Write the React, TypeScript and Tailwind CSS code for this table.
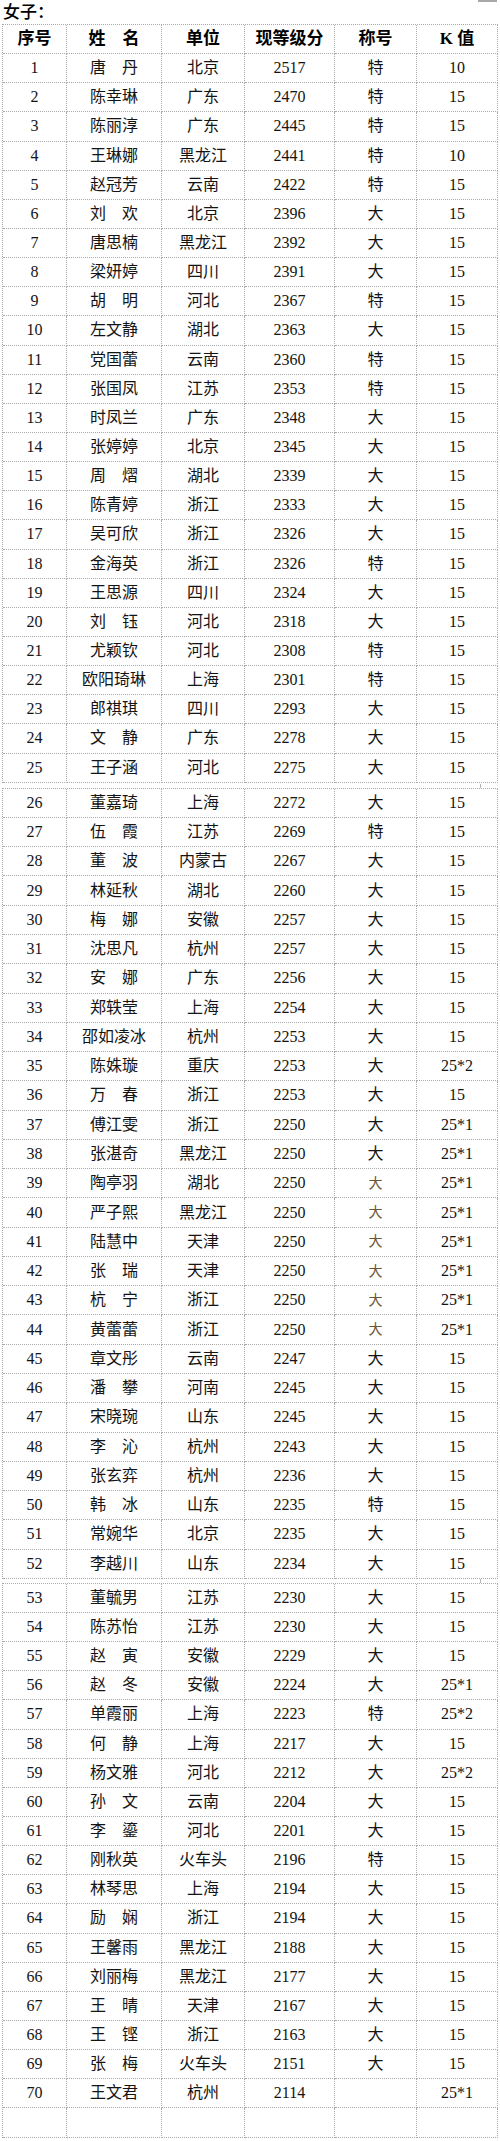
import React from 'react';

type Row = [number, string, string, number, string, string];

// [序号, 姓名, 单位, 现等级分, 称号, K值]
const rows: Row[] = [
  [1, '唐丹', '北京', 2517, '特', '10'],
  [2, '陈幸琳', '广东', 2470, '特', '15'],
  [3, '陈丽淳', '广东', 2445, '特', '15'],
  [4, '王琳娜', '黑龙江', 2441, '特', '10'],
  [5, '赵冠芳', '云南', 2422, '特', '15'],
  [6, '刘欢', '北京', 2396, '大', '15'],
  [7, '唐思楠', '黑龙江', 2392, '大', '15'],
  [8, '梁妍婷', '四川', 2391, '大', '15'],
  [9, '胡明', '河北', 2367, '特', '15'],
  [10, '左文静', '湖北', 2363, '大', '15'],
  [11, '党国蕾', '云南', 2360, '特', '15'],
  [12, '张国凤', '江苏', 2353, '特', '15'],
  [13, '时凤兰', '广东', 2348, '大', '15'],
  [14, '张婷婷', '北京', 2345, '大', '15'],
  [15, '周熠', '湖北', 2339, '大', '15'],
  [16, '陈青婷', '浙江', 2333, '大', '15'],
  [17, '吴可欣', '浙江', 2326, '大', '15'],
  [18, '金海英', '浙江', 2326, '特', '15'],
  [19, '王思源', '四川', 2324, '大', '15'],
  [20, '刘钰', '河北', 2318, '大', '15'],
  [21, '尤颖钦', '河北', 2308, '特', '15'],
  [22, '欧阳琦琳', '上海', 2301, '特', '15'],
  [23, '郎祺琪', '四川', 2293, '大', '15'],
  [24, '文静', '广东', 2278, '大', '15'],
  [25, '王子涵', '河北', 2275, '大', '15'],
  [26, '董嘉琦', '上海', 2272, '大', '15'],
  [27, '伍霞', '江苏', 2269, '特', '15'],
  [28, '董波', '内蒙古', 2267, '大', '15'],
  [29, '林延秋', '湖北', 2260, '大', '15'],
  [30, '梅娜', '安徽', 2257, '大', '15'],
  [31, '沈思凡', '杭州', 2257, '大', '15'],
  [32, '安娜', '广东', 2256, '大', '15'],
  [33, '郑轶莹', '上海', 2254, '大', '15'],
  [34, '邵如凌冰', '杭州', 2253, '大', '15'],
  [35, '陈姝璇', '重庆', 2253, '大', '25*2'],
  [36, '万春', '浙江', 2253, '大', '15'],
  [37, '傅江雯', '浙江', 2250, '大', '25*1'],
  [38, '张湛奇', '黑龙江', 2250, '大', '25*1'],
  [39, '陶亭羽', '湖北', 2250, '大', '25*1'],
  [40, '严子熙', '黑龙江', 2250, '大', '25*1'],
  [41, '陆慧中', '天津', 2250, '大', '25*1'],
  [42, '张瑞', '天津', 2250, '大', '25*1'],
  [43, '杭宁', '浙江', 2250, '大', '25*1'],
  [44, '黄蕾蕾', '浙江', 2250, '大', '25*1'],
  [45, '章文彤', '云南', 2247, '大', '15'],
  [46, '潘攀', '河南', 2245, '大', '15'],
  [47, '宋晓琬', '山东', 2245, '大', '15'],
  [48, '李沁', '杭州', 2243, '大', '15'],
  [49, '张玄弈', '杭州', 2236, '大', '15'],
  [50, '韩冰', '山东', 2235, '特', '15'],
  [51, '常婉华', '北京', 2235, '大', '15'],
  [52, '李越川', '山东', 2234, '大', '15'],
  [53, '董毓男', '江苏', 2230, '大', '15'],
  [54, '陈苏怡', '江苏', 2230, '大', '15'],
  [55, '赵寅', '安徽', 2229, '大', '15'],
  [56, '赵冬', '安徽', 2224, '大', '25*1'],
  [57, '单霞丽', '上海', 2223, '特', '25*2'],
  [58, '何静', '上海', 2217, '大', '15'],
  [59, '杨文雅', '河北', 2212, '大', '25*2'],
  [60, '孙文', '云南', 2204, '大', '15'],
  [61, '李鎏', '河北', 2201, '大', '15'],
  [62, '刚秋英', '火车头', 2196, '特', '15'],
  [63, '林琴思', '上海', 2194, '大', '15'],
  [64, '励娴', '浙江', 2194, '大', '15'],
  [65, '王馨雨', '黑龙江', 2188, '大', '15'],
  [66, '刘丽梅', '黑龙江', 2177, '大', '15'],
  [67, '王晴', '天津', 2167, '大', '15'],
  [68, '王铿', '浙江', 2163, '大', '15'],
  [69, '张梅', '火车头', 2151, '大', '15'],
  [70, '王文君', '杭州', 2114, '', '25*1'],
];

// rows whose 称号 was typed in a smaller, lighter face on the sheet
const faint = new Set([39, 40, 41, 42, 43, 44]);

// 2-char names are spread to the width of 3 chars, like the printed sheet
const spread = (name: string) => (name.length === 2 ? `${name[0]}\u3000${name[1]}` : name);

const cell =
  'flex items-center justify-center border-r border-b border-dotted border-[#a9a9a9] overflow-hidden whitespace-nowrap';

function Segment({ items, header, rowClass, blankRow }: {
  items: Row[];
  header?: boolean;
  rowClass: string;
  blankRow?: boolean;
}) {
  return (
    <div className="ml-[2px] grid w-[496px] grid-cols-[64px_95px_83px_90px_82px_81px] border-t border-l border-dotted border-[#a9a9a9]">
      {header && (
        <>
          {['序号', '姓\u3000名', '单位', '现等级分', '称号', 'K 值'].map((h) => (
            <div key={h} className={`${cell} ${rowClass} text-[17px] font-bold text-black`}>
              {h}
            </div>
          ))}
        </>
      )}
      {items.map((r) => (
        <React.Fragment key={r[0]}>
          <div className={`${cell} ${rowClass}`}>{r[0]}</div>
          <div className={`${cell} ${rowClass}`}>{spread(r[1])}</div>
          <div className={`${cell} ${rowClass}`}>{r[2]}</div>
          <div className={`${cell} ${rowClass}`}>{r[3]}</div>
          <div className={`${cell} ${rowClass} ${faint.has(r[0]) ? 'text-[14px] text-[#6b5733]' : ''}`}>{r[4]}</div>
          <div className={`${cell} ${rowClass}`}>{r[5]}</div>
        </React.Fragment>
      ))}
      {blankRow &&
        [0, 1, 2, 3, 4, 5].map((i) => <div key={i} className={`${cell} h-[30px]`} />)}
    </div>
  );
}

// little corner mark Word leaves where the table breaks across pages
function Break({ h }: { h: string }) {
  return (
    <div className={`flex ${h} items-end justify-end`}>
      <div className="mr-[19px] h-[4px] w-px bg-[#b5b5b5]" />
    </div>
  );
}

export default function App() {
  return (
    <div className="h-[2141px] w-[500px] bg-white font-['Liberation_Serif','Noto_Sans_CJK_SC',serif] text-[16px] text-[#141414]">
      <div className="flex h-[24px] items-start justify-between">
        <div className="pl-[3px] font-['Noto_Sans_CJK_SC',sans-serif] text-[17px] font-medium leading-[21px] text-black">女子：</div>
        <div className="mr-[3px] h-[2px] w-[19px] bg-[#a8a8a8]" />
      </div>
      <Segment items={rows.slice(0, 25)} header rowClass="h-[29.15px]" />
      <Break h="h-[5px]" />
      <Segment items={rows.slice(25, 52)} rowClass="h-[29.27px]" />
      <Break h="h-[4px]" />
      <Segment items={rows.slice(52)} rowClass="h-[29.15px]" blankRow />
    </div>
  );
}
